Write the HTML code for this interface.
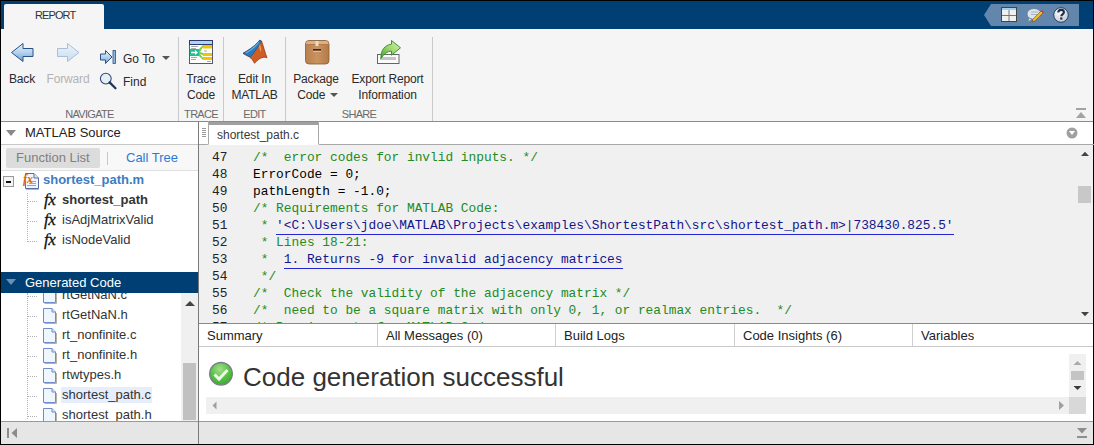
<!DOCTYPE html>
<html><head><meta charset="utf-8">
<style>
*{box-sizing:border-box;margin:0;padding:0}
html,body{width:1094px;height:445px;overflow:hidden;background:#000}
body{font-family:"Liberation Sans",sans-serif;position:relative}
.a{position:absolute}
.t{position:absolute;white-space:nowrap;color:#202020;font-size:12px;line-height:16px}
.rb{position:absolute;white-space:nowrap;color:#2b2b2b;font-size:12px;line-height:16px;text-align:center;letter-spacing:-0.15px}
.sec{position:absolute;top:107px;font-size:11px;color:#6a6a6a;line-height:14px;text-align:center;letter-spacing:-0.7px}
.vsep{position:absolute;top:37px;width:1px;height:84px;background:#c9c9c9}
.code{position:absolute;left:253px;font-family:"Liberation Mono",monospace;font-size:12.83px;line-height:17px;white-space:pre;color:#000}
.ln{position:absolute;left:200px;width:27.5px;text-align:right;font-family:"Liberation Mono",monospace;font-size:12.83px;line-height:17px;color:#222}
.cm{color:#228b22}
.lk{color:#14148c;border-bottom:1px solid #2525d8;padding-bottom:1px}
.tree{position:absolute;font-size:13px;line-height:16px;color:#333;white-space:nowrap}
.fx{position:absolute;font-family:"Liberation Serif",serif;font-style:italic;font-weight:normal;font-size:17px;line-height:16px;color:#111;letter-spacing:-0.5px;-webkit-text-stroke:0.3px #111}
.btab{position:absolute;top:324px;height:22px;font-size:13px;line-height:24px;color:#222;padding-left:8px;border-right:1px solid #d0d0d0}
</style></head><body>
<!-- window -->
<div class="a" style="left:1px;top:1px;width:1092px;height:443px;background:#f5f5f5"></div>
<!-- tab bar -->
<div class="a" style="left:1px;top:1px;width:1092px;height:28px;background:#003f73"></div>
<div class="a" style="left:4px;top:4px;width:100px;height:25px;background:#f5f5f5;border-radius:2px 2px 0 0"></div>
<div class="t" style="left:35px;top:7px;font-size:11px;color:#333;letter-spacing:-0.9px">REPORT</div>


<!-- ribbon -->
<div class="vsep" style="left:178px"></div>
<div class="vsep" style="left:223px"></div>
<div class="vsep" style="left:285px"></div>
<div class="vsep" style="left:432px;top:37px;height:84px"></div>
<div class="sec" style="left:1px;width:177px">NAVIGATE</div>
<div class="sec" style="left:179px;width:44px">TRACE</div>
<div class="sec" style="left:224px;width:61px">EDIT</div>
<div class="sec" style="left:286px;width:146px">SHARE</div>

<div class="rb" style="left:2px;width:40px;top:71px">Back</div>
<div class="rb" style="left:44px;width:48px;top:71px;color:#b3b3b3">Forward</div>
<div class="t" style="left:123px;top:51px;color:#2b2b2b">Go To</div>
<div class="t" style="left:123px;top:74px;color:#2b2b2b">Find</div>
<svg class="a" style="left:162px;top:56px" width="8" height="4"><polygon points="0,0 8,0 4,4" fill="#555"/></svg>
<div class="rb" style="left:181px;width:40px;top:71px">Trace<br>Code</div>
<div class="rb" style="left:226px;width:57px;top:71px">Edit In<br>MATLAB</div>
<div class="rb" style="left:291px;width:50px;top:71px">Package<br>Code&nbsp;&nbsp;&nbsp;</div>
<svg class="a" style="left:330px;top:93px" width="8" height="4"><polygon points="0,0 8,0 4,4" fill="#555"/></svg>
<div class="rb" style="left:345px;width:85px;top:71px">Export Report<br>Information</div>

<!-- ICONS -->
<svg class="a" style="left:0;top:0" width="1094" height="122" viewBox="0 0 1094 122">
<defs>
<linearGradient id="gb" x1="0" y1="0" x2="0" y2="1"><stop offset="0" stop-color="#e4f0fa"/><stop offset="0.5" stop-color="#b5d3ee"/><stop offset="1" stop-color="#6aa0d4"/></linearGradient>
<linearGradient id="gf" x1="0" y1="0" x2="0" y2="1"><stop offset="0" stop-color="#eef4fa"/><stop offset="1" stop-color="#c9dbee"/></linearGradient>
<linearGradient id="gbox" x1="0" y1="0" x2="1" y2="0"><stop offset="0" stop-color="#b97f4c"/><stop offset="0.5" stop-color="#c99360"/><stop offset="1" stop-color="#b47a48"/></linearGradient>
<linearGradient id="garr" x1="1" y1="0" x2="0" y2="1"><stop offset="0" stop-color="#d9f2b8"/><stop offset="0.5" stop-color="#9fd86e"/><stop offset="1" stop-color="#3fa22e"/></linearGradient>
<radialGradient id="ghelp" cx="0.4" cy="0.3" r="0.8"><stop offset="0" stop-color="#ffffff"/><stop offset="1" stop-color="#b9c3cf"/></radialGradient>
</defs>
<!-- back -->
<polygon points="11.5,52.5 23,43.5 23,48.5 33,48.5 33,56.5 23,56.5 23,61.5" fill="url(#gb)" stroke="#2a5385" stroke-width="1"/>
<!-- forward -->
<polygon points="79,52.5 67.5,43.5 67.5,48.5 57.5,48.5 57.5,56.5 67.5,56.5 67.5,61.5" fill="url(#gf)" stroke="#a9bfd9" stroke-width="1"/>
<!-- goto -->
<polygon points="100.5,54 105.5,54 105.5,50.5 112,57 105.5,63.5 105.5,60 100.5,60" fill="url(#gb)" stroke="#2a5385" stroke-width="1"/>
<rect x="113" y="50.5" width="2.5" height="13" fill="#8fb8e0" stroke="#2a5385" stroke-width="0.8"/>
<!-- find -->
<circle cx="105.8" cy="78.6" r="5.4" fill="#e6eef6" stroke="#2a4a72" stroke-width="1.05"/>
<line x1="109.6" y1="82.4" x2="115.5" y2="88.3" stroke="#1e3558" stroke-width="2.2" stroke-linecap="round"/>
<!-- trace code -->
<rect x="189.5" y="40.5" width="23" height="23" fill="#fff" stroke="#5a5a66" stroke-width="1"/>
<rect x="189.5" y="40.5" width="23" height="4" fill="#a9d6f5" stroke="#2e3a6e" stroke-width="1"/>
<line x1="191" y1="46.5" x2="198" y2="46.5" stroke="#aaa"/><line x1="191" y1="48.5" x2="196" y2="48.5" stroke="#aaa"/>
<line x1="191" y1="57.5" x2="197" y2="57.5" stroke="#aaa"/><line x1="191" y1="59.5" x2="196" y2="59.5" stroke="#aaa"/>
<rect x="190" y="49" width="9" height="7" fill="#22bf93"/>
<polygon points="191,51.8 195,51.8 195,50 198,52.5 195,55 195,53.2 191,53.2" fill="#fff"/>
<path d="M199 49 L203 45 L203 47 L200 52 L203 53 L203 55 L200 54 L203 58 L203 60 L199 56 Z" fill="#7ccc3c"/>
<rect x="203" y="45" width="9" height="3.5" fill="#f4c400"/>
<rect x="203" y="53" width="9" height="3" fill="#f4c400"/>
<rect x="203" y="57" width="9" height="3" fill="#f4c400"/>
<line x1="204" y1="51" x2="207" y2="51" stroke="#aaa"/>
<line x1="207" y1="61.5" x2="211" y2="61.5" stroke="#aaa"/>
<!-- matlab logo -->
<path d="M243,53.3 C248,50.5 254,47 259.6,40.3 L261.5,41 C263.5,46 265,53 267,57.8 L265,57.2 C261,57 257.5,60 254.5,63.3 C253,60.5 251.5,58.3 249.5,57 C247,55.7 245,54.5 243,53.3 Z" fill="#cf5e22" stroke="#8c2a10" stroke-width="0.7"/>
<path d="M243,53.3 C248,50.5 254,47 259.6,40.3 L261.5,41 C258,47 255,52 250.5,56.8 C247.5,55.8 245,54.5 243,53.3 Z" fill="#2a78bf" stroke="#1d4f86" stroke-width="0.6"/>
<path d="M246,53 C250,51 255,47 259,42" stroke="#5cb6ea" stroke-width="1.2" fill="none"/>
<path d="M259.5,44 C260.5,46 261,49 260.8,52 C259.8,50 259.2,47 259.5,44 Z" fill="#f2c08a"/>
<!-- package -->
<rect x="305.5" y="40.5" width="23.5" height="23.5" rx="3.5" fill="url(#gbox)" stroke="#8a5a2e" stroke-width="0.8"/>
<path d="M306,44 Q306,41 309,41 L326,41 Q328.5,41 328.5,44 Z" fill="#dcb08a"/>
<line x1="306" y1="44.5" x2="328.5" y2="44.5" stroke="#b07a48" stroke-width="0.8"/>
<rect x="315.5" y="41" width="3" height="5" fill="#e9dcc8"/>
<rect x="313" y="49" width="8" height="1.8" fill="#3a2a22"/>
<rect x="313" y="50.8" width="8" height="0.8" fill="#f0d8c0"/>
<!-- export -->
<rect x="377.5" y="54.5" width="21.5" height="9" fill="#fafafa" stroke="#666" stroke-width="1"/>
<rect x="380" y="57" width="16" height="3" fill="#c4c4c4"/>
<path d="M381,58.5 C380.5,50 385,45 391.5,44.2 L391.5,40.5 L400.5,47.8 L391.5,55.2 L391.5,51.2 C387,51.2 384,54 381,58.5 Z" fill="url(#garr)" stroke="#2f8a25" stroke-width="0.9" stroke-linejoin="round"/>
<!-- quick access -->
<polygon points="984,15 991,4 1079,4 1079,26 991,26" fill="#6387ac"/>
<rect x="1001.5" y="7.5" width="15" height="14" fill="#f0f0f0" stroke="#444" stroke-width="1"/>
<rect x="1002" y="8" width="14" height="2" fill="#9fd0f0"/>
<line x1="1009" y1="10" x2="1009" y2="21" stroke="#777"/><line x1="1002" y1="15.5" x2="1016" y2="15.5" stroke="#777"/>
<ellipse cx="1034" cy="14" rx="7" ry="5.5" fill="#dde6ee" stroke="#6a7a8a" stroke-width="0.8"/>
<path d="M1029 18 L1028 22 L1032 19 Z" fill="#dde6ee" stroke="#6a7a8a" stroke-width="0.6"/>
<line x1="1031" y1="12" x2="1038" y2="12" stroke="#9aa" stroke-width="0.8"/><line x1="1031" y1="14.5" x2="1037" y2="14.5" stroke="#9aa" stroke-width="0.8"/>
<path d="M1032 22 L1033 19 L1041 11 L1043 13 L1035 21 Z" fill="#f1b732" stroke="#6a4a10" stroke-width="0.6"/>
<path d="M1041 11 L1042 10 L1044 12 L1043 13 Z" fill="#d33"/>
<circle cx="1061" cy="15" r="7.3" fill="url(#ghelp)" stroke="#2b3c5c" stroke-width="1"/>
<path d="M1058.3,12.6 C1058.3,10.8 1059.6,9.9 1061.1,9.9 C1062.7,9.9 1063.9,10.9 1063.9,12.3 C1063.9,14.2 1061.3,14.4 1061.3,16.2" fill="none" stroke="#1f2d4f" stroke-width="2.1"/><rect x="1060.2" y="17.4" width="2.2" height="2.2" fill="#1f2d4f"/>
</svg>
<!-- collapse ribbon -->
<div class="a" style="left:1076px;top:108px;width:10px;height:2px;background:#a3a3a3"></div>
<svg class="a" style="left:1076px;top:112px" width="10" height="6"><polygon points="5,0 10,6 0,6" fill="#a3a3a3"/></svg>
<div class="a" style="left:1px;top:121px;width:1092px;height:1px;background:#8c8c8c"></div>

<!-- LEFT PANEL -->
<div class="a" style="left:1px;top:122px;width:197px;height:300px;background:#fff"></div>
<svg class="a" style="left:6px;top:130px" width="10" height="6"><polygon points="0,0 10,0 5,6" fill="#8a8a8a"/></svg>
<div class="tree" style="left:25px;top:125px;color:#222">MATLAB Source</div>
<div class="a" style="left:1px;top:144px;width:197px;height:1px;background:#c8c8c8"></div>
<div class="a" style="left:1px;top:145px;width:197px;height:25px;background:#f8f8f8"></div>
<div class="a" style="left:6px;top:148px;width:94px;height:20px;background:#dcdcdc;border-radius:2px"></div>
<div class="tree" style="left:16px;top:150px;color:#808080">Function List</div>
<div class="a" style="left:107px;top:152px;width:1px;height:13px;background:#c8c8c8"></div>
<div class="tree" style="left:126px;top:150px;color:#2a7bd6">Call Tree</div>
<div class="a" style="left:1px;top:170px;width:197px;height:1px;background:#e0e0e0"></div>
<!-- tree -->
<div class="a" style="left:3px;top:176px;width:11px;height:11px;border:1px solid #9a9a9a;background:#f4f4f4"></div>
<div class="a" style="left:6px;top:180.5px;width:5px;height:2px;background:#111"></div>
<div class="tree" style="left:43px;top:172px;font-weight:bold;color:#3d7cc0">shortest_path.m</div>
<svg class="a" style="left:22px;top:172px" width="18" height="18"><path d="M3.5 1.5 H12 L16.5 6 V16.5 H3.5 Z" fill="#f2f6fc" stroke="#5570a0"/><path d="M12 1.5 V6 H16.5" fill="#dfe7f3" stroke="#5570a0"/><line x1="7" y1="9.5" x2="14" y2="9.5" stroke="#9aa6b8"/><line x1="7" y1="11.5" x2="14" y2="11.5" stroke="#9aa6b8"/><line x1="5" y1="13.5" x2="14" y2="13.5" stroke="#9aa6b8"/><rect x="4" y="17" width="13" height="1" fill="#b8b8b8"/><text x="1" y="11" font-family="Liberation Serif" font-style="italic" font-weight="bold" font-size="12" fill="#e06a10">fx</text></svg>
<div class="a" style="left:27px;top:193px;width:1px;height:49px;border-left:1px dotted #b0b0b0"></div>
<div class="a" style="left:28px;top:201px;width:9px;height:1px;border-top:1px dotted #b0b0b0"></div>
<div class="a" style="left:28px;top:221px;width:9px;height:1px;border-top:1px dotted #b0b0b0"></div>
<div class="a" style="left:28px;top:241px;width:9px;height:1px;border-top:1px dotted #b0b0b0"></div>
<div class="fx" style="left:44px;top:192px">fx</div>
<div class="fx" style="left:44px;top:212px">fx</div>
<div class="fx" style="left:44px;top:232px">fx</div>
<div class="tree" style="left:62px;top:192px;font-weight:bold">shortest_path</div>
<div class="tree" style="left:62px;top:212px">isAdjMatrixValid</div>
<div class="tree" style="left:62px;top:232px">isNodeValid</div>

<!-- generated code header -->
<div class="a" style="left:1px;top:272px;width:197px;height:21px;background:#003f73"></div>
<svg class="a" style="left:6px;top:279px" width="10" height="6"><polygon points="0,0 10,0 5,6" fill="#6d8fb0"/></svg>
<div class="tree" style="left:25px;top:275px;color:#fff;font-size:13px">Generated Code</div>
<!-- file list -->
<div class="a" style="left:27px;top:293px;width:1px;height:126px;border-left:1px dotted #b0b0b0"></div>
<div class="a" style="left:1px;top:293px;width:180px;height:128px;overflow:hidden">
<div class="a" style="left:27px;top:3px;width:9px;height:1px;border-top:1px dotted #b0b0b0"></div>
<svg class="a" style="left:41px;top:-5px" width="16" height="17"><path d="M2.5 15.5 H14.5 V5" fill="none" stroke="#b8b0a0" stroke-width="1"/><path d="M1.5 0.5 H10 L13.5 4 V14.5 H1.5 Z" fill="#f0f6fd" stroke="#6d8cc8"/><path d="M10 0.5 V4 H13.5" fill="#d8e4f6" stroke="#6d8cc8"/></svg>
<div class="tree" style="left:60px;top:-6px;padding:0 1px">rtGetNaN.c</div>
<div class="a" style="left:27px;top:23px;width:9px;height:1px;border-top:1px dotted #b0b0b0"></div>
<svg class="a" style="left:41px;top:15px" width="16" height="17"><path d="M2.5 15.5 H14.5 V5" fill="none" stroke="#b8b0a0" stroke-width="1"/><path d="M1.5 0.5 H10 L13.5 4 V14.5 H1.5 Z" fill="#f0f6fd" stroke="#6d8cc8"/><path d="M10 0.5 V4 H13.5" fill="#d8e4f6" stroke="#6d8cc8"/></svg>
<div class="tree" style="left:60px;top:14px;padding:0 1px">rtGetNaN.h</div>
<div class="a" style="left:27px;top:43px;width:9px;height:1px;border-top:1px dotted #b0b0b0"></div>
<svg class="a" style="left:41px;top:35px" width="16" height="17"><path d="M2.5 15.5 H14.5 V5" fill="none" stroke="#b8b0a0" stroke-width="1"/><path d="M1.5 0.5 H10 L13.5 4 V14.5 H1.5 Z" fill="#f0f6fd" stroke="#6d8cc8"/><path d="M10 0.5 V4 H13.5" fill="#d8e4f6" stroke="#6d8cc8"/></svg>
<div class="tree" style="left:60px;top:34px;padding:0 1px">rt_nonfinite.c</div>
<div class="a" style="left:27px;top:63px;width:9px;height:1px;border-top:1px dotted #b0b0b0"></div>
<svg class="a" style="left:41px;top:55px" width="16" height="17"><path d="M2.5 15.5 H14.5 V5" fill="none" stroke="#b8b0a0" stroke-width="1"/><path d="M1.5 0.5 H10 L13.5 4 V14.5 H1.5 Z" fill="#f0f6fd" stroke="#6d8cc8"/><path d="M10 0.5 V4 H13.5" fill="#d8e4f6" stroke="#6d8cc8"/></svg>
<div class="tree" style="left:60px;top:54px;padding:0 1px">rt_nonfinite.h</div>
<div class="a" style="left:27px;top:83px;width:9px;height:1px;border-top:1px dotted #b0b0b0"></div>
<svg class="a" style="left:41px;top:75px" width="16" height="17"><path d="M2.5 15.5 H14.5 V5" fill="none" stroke="#b8b0a0" stroke-width="1"/><path d="M1.5 0.5 H10 L13.5 4 V14.5 H1.5 Z" fill="#f0f6fd" stroke="#6d8cc8"/><path d="M10 0.5 V4 H13.5" fill="#d8e4f6" stroke="#6d8cc8"/></svg>
<div class="tree" style="left:60px;top:74px;padding:0 1px">rtwtypes.h</div>
<div class="a" style="left:27px;top:103px;width:9px;height:1px;border-top:1px dotted #b0b0b0"></div>
<svg class="a" style="left:41px;top:95px" width="16" height="17"><path d="M2.5 15.5 H14.5 V5" fill="none" stroke="#b8b0a0" stroke-width="1"/><path d="M1.5 0.5 H10 L13.5 4 V14.5 H1.5 Z" fill="#f0f6fd" stroke="#6d8cc8"/><path d="M10 0.5 V4 H13.5" fill="#d8e4f6" stroke="#6d8cc8"/></svg>
<div class="tree" style="left:60px;top:94px;padding:0 1px;background:#e6eefb">shortest_path.c</div>
<div class="a" style="left:27px;top:123px;width:9px;height:1px;border-top:1px dotted #b0b0b0"></div>
<svg class="a" style="left:41px;top:115px" width="16" height="17"><path d="M2.5 15.5 H14.5 V5" fill="none" stroke="#b8b0a0" stroke-width="1"/><path d="M1.5 0.5 H10 L13.5 4 V14.5 H1.5 Z" fill="#f0f6fd" stroke="#6d8cc8"/><path d="M10 0.5 V4 H13.5" fill="#d8e4f6" stroke="#6d8cc8"/></svg>
<div class="tree" style="left:60px;top:114px;padding:0 1px">shortest_path.h</div>
</div>
<!-- left scrollbar -->
<div class="a" style="left:181px;top:293px;width:17px;height:129px;background:#f0f0f0"></div>
<svg class="a" style="left:185px;top:301px" width="10" height="6"><polygon points="5,0 10,5 0,5" fill="#444"/></svg>
<div class="a" style="left:183px;top:363px;width:13px;height:57px;background:#c1c1c1"></div>
<!-- left bottom bar -->
<div class="a" style="left:1px;top:421px;width:197px;height:1px;background:#9a9a9a"></div>
<div class="a" style="left:1px;top:422px;width:197px;height:22px;background:#e6e6e6"></div>
<div class="a" style="left:7px;top:428px;width:2px;height:10px;background:#8c8c8c"></div>
<svg class="a" style="left:11px;top:428px" width="7" height="10"><polygon points="6,0 6,10 0.5,5" fill="#8c8c8c"/></svg>

<!-- separator -->
<div class="a" style="left:198px;top:122px;width:1px;height:322px;background:#7a7a7a"></div>

<!-- RIGHT PANEL -->
<div class="a" style="left:199px;top:122px;width:894px;height:23px;background:#fff"></div>
<div class="a" style="left:199px;top:121px;width:10px;height:24px;border-right:1px solid #a8a8a8;border-bottom:1px solid #a8a8a8;border-radius:0 0 2px 0"></div>
<div class="a" style="left:202px;top:128px;width:4px;height:1px;background:#999;box-shadow:0 2px 0 #999,0 4px 0 #999,0 6px 0 #999,0 8px 0 #999"></div>
<div class="a" style="left:318px;top:121px;width:780px;height:24px;border-left:1px solid #a8a8a8;border-bottom:1px solid #a8a8a8;border-radius:0 0 0 2px"></div>
<div class="a" style="left:209px;top:122px;width:109px;height:3px;background:#a0a0a0"></div>
<div class="t" style="left:217px;top:127px;font-size:12px;color:#3a3a3a">shortest_path.c</div>
<svg class="a" style="left:1066px;top:127px" width="12" height="12"><circle cx="6" cy="6" r="5.5" fill="#a0a0a0"/><polygon points="3,4 9,4 6,8" fill="#fff"/></svg>
<!-- code area -->
<div class="a" style="left:199px;top:145px;width:894px;height:178px;background:#f0f0f0;overflow:hidden">
</div>
<div class="a" style="left:199px;top:145px;width:878px;height:178px;overflow:hidden">
<div class="ln" style="left:1px;top:4px">47</div>
<div class="code" style="left:54px;top:4px"><span class="cm">/*  error codes for invlid inputs. */</span></div>
<div class="ln" style="left:1px;top:21px">48</div>
<div class="code" style="left:54px;top:21px">ErrorCode = 0;</div>
<div class="ln" style="left:1px;top:38px">49</div>
<div class="code" style="left:54px;top:38px">pathLength = -1.0;</div>
<div class="ln" style="left:1px;top:55px">50</div>
<div class="code" style="left:54px;top:55px"><span class="cm">/* Requirements for MATLAB Code:</span></div>
<div class="ln" style="left:1px;top:72px">51</div>
<div class="code" style="left:54px;top:72px"><span class="cm"> * </span><span class="lk">'&lt;C:\Users\jdoe\MATLAB\Projects\examples\ShortestPath\src\shortest_path.m&gt;|738430.825.5'</span></div>
<div class="ln" style="left:1px;top:89px">52</div>
<div class="code" style="left:54px;top:89px"><span class="cm"> * Lines 18-21:</span></div>
<div class="ln" style="left:1px;top:106px">53</div>
<div class="code" style="left:54px;top:106px"><span class="cm"> *  </span><span class="lk">1. Returns -9 for invalid adjacency matrices</span></div>
<div class="ln" style="left:1px;top:123px">54</div>
<div class="code" style="left:54px;top:123px"><span class="cm"> */</span></div>
<div class="ln" style="left:1px;top:140px">55</div>
<div class="code" style="left:54px;top:140px"><span class="cm">/*  Check the validity of the adjacency matrix */</span></div>
<div class="ln" style="left:1px;top:157px">56</div>
<div class="code" style="left:54px;top:157px"><span class="cm">/*  need to be a square matrix with only 0, 1, or realmax entries.  */</span></div>
<div class="ln" style="left:1px;top:174px">57</div>
<div class="code" style="left:54px;top:174px"><span class="cm">/* Requirements for MATLAB Code:</span></div>
</div>
<!-- code scrollbar -->
<svg class="a" style="left:1080px;top:151px" width="10" height="6"><polygon points="5,0.8 9,5 1,5" fill="#444"/></svg>
<div class="a" style="left:1078px;top:186px;width:13px;height:17px;background:#c8c8c8"></div>
<svg class="a" style="left:1080px;top:312px" width="10" height="5"><polygon points="1,0 9,0 5,4.2" fill="#444"/></svg>
<div class="a" style="left:199px;top:323px;width:894px;height:1px;background:#8a8a8a"></div>
<!-- bottom tabs -->
<div class="a" style="left:199px;top:324px;width:894px;height:22px;background:#fff"></div>
<div class="btab" style="left:199px;width:179px">Summary</div>
<div class="btab" style="left:378px;width:178px">All Messages (0)</div>
<div class="btab" style="left:556px;width:179px">Build Logs</div>
<div class="btab" style="left:735px;width:178px">Code Insights (6)</div>
<div class="btab" style="left:913px;width:180px;border-right:none">Variables</div>
<div class="a" style="left:199px;top:346px;width:894px;height:1px;background:#c8c8c8"></div>
<div class="a" style="left:199px;top:347px;width:894px;height:74px;background:#fff"></div>
<div class="t" style="left:243px;top:362px;font-size:26px;line-height:30px;color:#333">Code generation successful</div>
<svg class="a" style="left:208px;top:361px" width="26" height="26"><defs><radialGradient id="gchk" cx="0.45" cy="0.3" r="0.75"><stop offset="0" stop-color="#a6dc8e"/><stop offset="0.5" stop-color="#5cc648"/><stop offset="1" stop-color="#3aa52c"/></radialGradient></defs><circle cx="13" cy="12.8" r="11.3" fill="url(#gchk)" stroke="#7a8088" stroke-width="1.4"/><path d="M6.5 13.5 L11 18 L19.5 9" stroke="#eef8ea" stroke-width="3" fill="none"/></svg>
<!-- summary scrollbars -->
<div class="a" style="left:206px;top:397px;width:864px;height:17px;background:#f0f0f0"></div>
<svg class="a" style="left:212px;top:401px" width="5" height="9"><polygon points="4.5,0.5 4.5,8.5 0.5,4.5" fill="#a0a0a0"/></svg>
<svg class="a" style="left:1059px;top:401px" width="5" height="9"><polygon points="0,0 5,4.5 0,9" fill="#a0a0a0"/></svg>
<div class="a" style="left:1069px;top:354px;width:17px;height:43px;background:#f0f0f0"></div>
<svg class="a" style="left:1073px;top:361px" width="9" height="4"><polygon points="4.5,0 8.5,4 0.5,4" fill="#aaa"/></svg>
<div class="a" style="left:1071px;top:371px;width:13px;height:9px;background:#c4c4c4"></div>
<svg class="a" style="left:1073px;top:386px" width="9" height="4"><polygon points="0.5,0 8.5,0 4.5,4" fill="#3a3a3a"/></svg>
<div class="a" style="left:1069px;top:397px;width:17px;height:17px;background:#d8d8d8"></div>
<!-- right bottom bar -->
<div class="a" style="left:199px;top:421px;width:894px;height:1px;background:#9a9a9a"></div>
<div class="a" style="left:199px;top:422px;width:894px;height:22px;background:#e6e6e6"></div>
<svg class="a" style="left:1077px;top:428px" width="10" height="11"><polygon points="0,0 10,0 5,5.5" fill="#8e8e8e"/><rect x="0" y="8" width="10" height="2" fill="#8e8e8e"/></svg>
</body></html>
